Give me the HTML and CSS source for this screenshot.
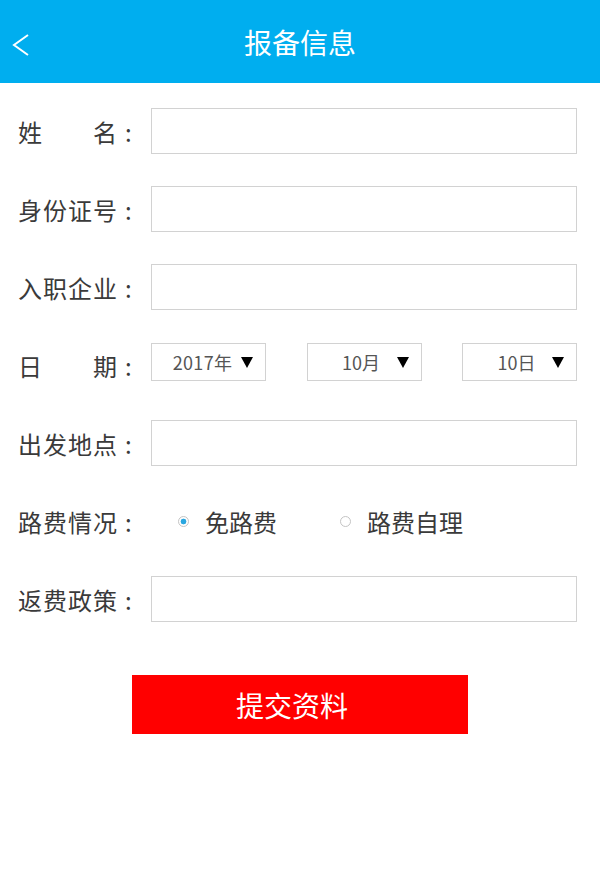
FILE: index.html
```html
<!DOCTYPE html>
<html lang="zh-CN">
<head>
<meta charset="utf-8">
<title>报备信息</title>
<link rel="stylesheet" href="styles.css">
</head>
<body>
<header class="header">
  <div class="back">
    <svg width="20" height="24" viewBox="0 0 20 24"><polyline points="17,2 3,12 17,22" fill="none" stroke="#fff" stroke-width="2"/></svg>
  </div>
  <h1 class="title">报备信息</h1>
  <div></div>
</header>
<main class="form">
  <div class="row"><span class="lbl">姓名</span><span class="colon">:</span><input class="field" type="text"></div>
  <div class="row"><span class="lbl">身份证号</span><span class="colon">:</span><input class="field" type="text"></div>
  <div class="row"><span class="lbl">入职企业</span><span class="colon">:</span><input class="field" type="text"></div>
  <div class="row"><span class="lbl">日期</span><span class="colon">:</span>
    <div class="dates">
      <div class="sel sel-year"><span>2017年</span><i class="tri"></i></div>
      <div class="sel"><span>10月</span><i class="tri"></i></div>
      <div class="sel"><span>10日</span><i class="tri"></i></div>
    </div>
  </div>
  <div class="row"><span class="lbl">出发地点</span><span class="colon">:</span><input class="field" type="text"></div>
  <div class="row"><span class="lbl">路费情况</span><span class="colon">:</span>
    <div class="radios">
      <label class="opt"><span class="dot on"></span>免路费</label>
      <label class="opt"><span class="dot"></span>路费自理</label>
    </div>
  </div>
  <div class="row"><span class="lbl">返费政策</span><span class="colon">:</span><input class="field" type="text"></div>
</main>
<div class="actions">
  <button class="submit" type="button">提交资料</button>
</div>
</body>
</html>
```

FILE: styles.css
```css
* { box-sizing: border-box; }
body {
  margin: 0;
  background: #fff;
  font-family: "Noto Sans CJK SC", "Noto Sans", sans-serif;
  color: #333;
}
.header {
  height: 83px;
  background: #00aeef;
  display: grid;
  grid-template-columns: 80px 1fr 80px;
  align-items: center;
}
.back {
  padding-left: 11px;
  display: flex;
  align-items: center;
  padding-top: 6px;
}
.title {
  margin: 0;
  text-align: center;
  color: #fff;
  font-size: 28px;
  font-weight: normal;
}
.form {
  padding: 25px 23px 0 18px;
  display: flex;
  flex-direction: column;
  gap: 32px;
}
.row {
  height: 46px;
  display: flex;
  align-items: center;
  font-size: 24px;
}
.lbl {
  width: 99px;
  text-align: justify;
  text-align-last: justify;
  color: #3a3a3a;
}
.colon {
  width: 34px;
  padding-left: 8px;
  color: #3a3a3a;
}
.field {
  flex: 1;
  height: 46px;
  border: 1px solid #d2d2d2;
  background: #fff;
  margin: 0;
  padding: 0 8px;
  font: inherit;
  outline: none;
  border-radius: 0;
}
.dates {
  flex: 1;
  display: flex;
  justify-content: space-between;
  margin-top: -6px;
}
.sel {
  position: relative;
  width: 115px;
  height: 38px;
  border: 1px solid #d2d2d2;
  display: flex;
  align-items: center;
  justify-content: center;
  padding-right: 6px;
  font-size: 18px;
  color: #555;
}
.sel-year { padding-right: 12px; letter-spacing: 0.3px; }
.tri {
  position: absolute;
  right: 12px;
  top: 13px;
  width: 0;
  height: 0;
  border-left: 6.5px solid transparent;
  border-right: 6.5px solid transparent;
  border-top: 11px solid #000;
}
.radios {
  display: flex;
  align-items: center;
  gap: 63px;
  padding-left: 27px;
}
.opt {
  display: flex;
  align-items: center;
  gap: 16px;
  color: #3a3a3a;
}
.dot {
  width: 11px;
  height: 11px;
  border-radius: 50%;
  border: 1px solid #c4c4c4;
  background: #fff;
}
.dot.on {
  background: radial-gradient(circle, #2aa7e0 0 2.6px, #fff 3.2px);
}
.actions {
  display: flex;
  justify-content: center;
  margin-top: 53px;
}
.submit {
  width: 336px;
  height: 59px;
  border: 0;
  border-radius: 0;
  background: #ff0000;
  color: #fff;
  font-family: inherit;
  font-size: 28px;
  padding: 0 16px 0 0;
}
```
